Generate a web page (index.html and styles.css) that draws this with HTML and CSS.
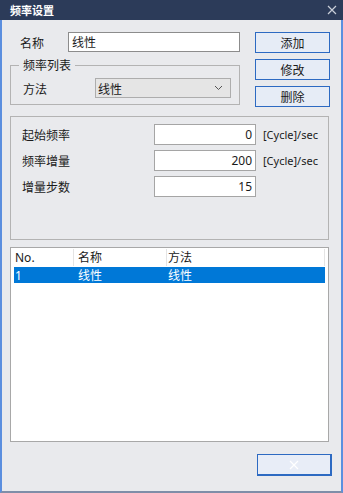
FILE: index.html
```html
<!DOCTYPE html>
<html lang="zh-CN">
<head>
    <meta charset="UTF-8">
    <title>频率设置</title>
    <link rel="stylesheet" href="styles.css">
</head>
<body>
    <div class="window">
        <div class="title-bar">
            <span class="title">频率设置</span>
            <svg class="close-icon" width="10" height="10" viewBox="0 0 10 10">
                <path d="M1 1 L9 9 M9 1 L1 9" stroke="#c9ced8" stroke-width="1.2"/>
            </svg>
        </div>

        <div class="content">
            <div class="top-area">
                <div class="left-col">
                    <div class="name-row">
                        <span class="label name-label">名称</span>
                        <div class="text-box name-box">线性</div>
                    </div>
                    <div class="group-box">
                        <span class="legend">频率列表</span>
                        <div class="method-row">
                            <span class="label">方法</span>
                            <div class="combo">
                                <span>线性</span>
                                <svg width="9" height="6" viewBox="0 0 9 6">
                                    <path d="M1 1 L4.5 4.5 L8 1" fill="none" stroke="#555" stroke-width="1"/>
                                </svg>
                            </div>
                        </div>
                    </div>
                </div>
                <div class="button-col">
                    <button class="btn">添加</button>
                    <button class="btn">修改</button>
                    <button class="btn">删除</button>
                </div>
            </div>

            <div class="param-panel">
                <div class="param-row">
                    <span class="label param-label">起始频率</span>
                    <div class="text-box num-box">0</div>
                    <span class="unit">[Cycle]/sec</span>
                </div>
                <div class="param-row">
                    <span class="label param-label">频率增量</span>
                    <div class="text-box num-box">200</div>
                    <span class="unit">[Cycle]/sec</span>
                </div>
                <div class="param-row">
                    <span class="label param-label">增量步数</span>
                    <div class="text-box num-box">15</div>
                </div>
            </div>

            <div class="list-view">
                <div class="list-header">
                    <span class="col col-no">No.</span>
                    <span class="col col-name">名称</span>
                    <span class="col col-method">方法</span>
                </div>
                <div class="list-row selected">
                    <span class="col col-no">1</span>
                    <span class="col col-name">线性</span>
                    <span class="col col-method">线性</span>
                </div>
            </div>

            <div class="footer">
                <button class="btn btn-close">
                    <svg width="10" height="10" viewBox="0 0 10 10">
                        <path d="M1 1 L9 9 M9 1 L1 9" stroke="#ffffff" stroke-width="1.2"/>
                    </svg>
                </button>
            </div>
        </div>
    </div>
</body>
</html>
```

FILE: styles.css
```css
body {
    margin: 0;
    font-family: "Noto Sans", "Noto Sans CJK SC", sans-serif;
    font-size: 12px;
    color: #1a1a1a;
}
.window {
    width: 343px;
    height: 493px;
    box-sizing: border-box;
    background-color: #e9eaed;
    border-left: 2px solid #5b8fdf;
    border-right: 2px solid #5b8fdf;
    border-bottom: 2px solid #7f8ea8;
    display: flex;
    flex-direction: column;
}
.title-bar {
    height: 20px;
    margin: 0 -2px;
    padding: 0 6px 0 10px;
    background-color: #2c3b59;
    display: flex;
    align-items: center;
    justify-content: space-between;
}
.title {
    color: #ffffff;
    font-weight: bold;
    font-size: 11px;
    font-family: "Noto Sans CJK SC", sans-serif;
}
.content {
    flex: 1;
    padding: 12px 11px 0 8px;
    display: flex;
    flex-direction: column;
}
.label {
    box-sizing: border-box;
    font-family: "Noto Sans CJK SC", sans-serif;
    font-size: 12px;
}
.top-area {
    display: flex;
    gap: 15px;
}
.left-col {
    width: 230px;
}
.name-row {
    display: flex;
    align-items: center;
    height: 20px;
}
.name-label {
    width: 58px;
    padding-left: 10px;
}
.text-box {
    box-sizing: border-box;
    height: 20px;
    background-color: #ffffff;
    border: 1px solid #8c8c8c;
    line-height: 18px;
    padding: 0 3px;
    font-family: "Noto Sans CJK SC", sans-serif;
}
.name-box {
    width: 172px;
}
.group-box {
    position: relative;
    margin-top: 13px;
    height: 40px;
    box-sizing: border-box;
    border: 1px solid #b3b3b3;
    padding: 12px 8px 0 12px;
}
.legend {
    position: absolute;
    top: -9px;
    left: 8px;
    padding: 0 4px;
    background-color: #e9eaed;
    font-family: "Noto Sans CJK SC", sans-serif;
    line-height: 16px;
}
.method-row {
    display: flex;
    align-items: center;
}
.method-row .label {
    width: 72px;
}
.combo {
    box-sizing: border-box;
    width: 136px;
    height: 20px;
    background-color: #e5e5e5;
    border: 1px solid #adadad;
    display: flex;
    align-items: center;
    justify-content: space-between;
    padding: 0 7px 0 2px;
    font-family: "Noto Sans CJK SC", sans-serif;
}
.button-col {
    display: flex;
    flex-direction: column;
    gap: 6px;
}
.btn {
    box-sizing: border-box;
    width: 75px;
    height: 21px;
    padding: 0;
    background-color: #e6ecf6;
    border: 1px solid #2d6ac2;
    font-family: "Noto Sans CJK SC", sans-serif;
    font-size: 12px;
    color: #1a1a1a;
}
.param-panel {
    margin-top: 9px;
    margin-right: 1px;
    height: 124px;
    box-sizing: border-box;
    border: 1px solid #b3b3b3;
    padding: 7px 0 0 11px;
    display: flex;
    flex-direction: column;
    gap: 5px;
}
.param-row {
    display: flex;
    align-items: center;
    height: 21px;
}
.param-label {
    width: 132px;
}
.num-box {
    width: 102px;
    height: 21px;
    line-height: 19px;
    text-align: right;
    border-color: #a5a5a5;
    font-family: "Noto Sans", sans-serif;
}
.unit {
    margin-left: 7px;
    font-family: "Noto Sans", sans-serif;
    font-size: 11px;
}
.list-view {
    margin-top: 7px;
    margin-right: 1px;
    height: 195px;
    box-sizing: border-box;
    background-color: #ffffff;
    border: 1px solid #a8a8a8;
    padding: 1px 3px;
}
.list-header,
.list-row {
    display: flex;
    height: 17px;
    align-items: center;
}
.list-header .col {
    border-right: 1px solid #e4e4e4;
    height: 17px;
    line-height: 17px;
}
.list-row {
    height: 16px;
    margin-top: 1px;
}
.col {
    box-sizing: border-box;
    font-family: "Noto Sans", "Noto Sans CJK SC", sans-serif;
}
.col-no {
    width: 60px;
    padding-left: 1px;
}
.col-name {
    width: 93px;
    padding-left: 4px;
}
.col-method {
    width: 158px;
    padding-left: 1px;
}
.selected {
    background-color: #0078d7;
    color: #ffffff;
}
.footer {
    margin-top: 12px;
    margin-right: -2px;
    display: flex;
    justify-content: flex-end;
}
.btn-close {
    width: 75px;
    height: 22px;
    border-width: 1px 2px 2px 1px;
    background-color: #e8edf7;
    display: flex;
    align-items: center;
    justify-content: center;
}
```
